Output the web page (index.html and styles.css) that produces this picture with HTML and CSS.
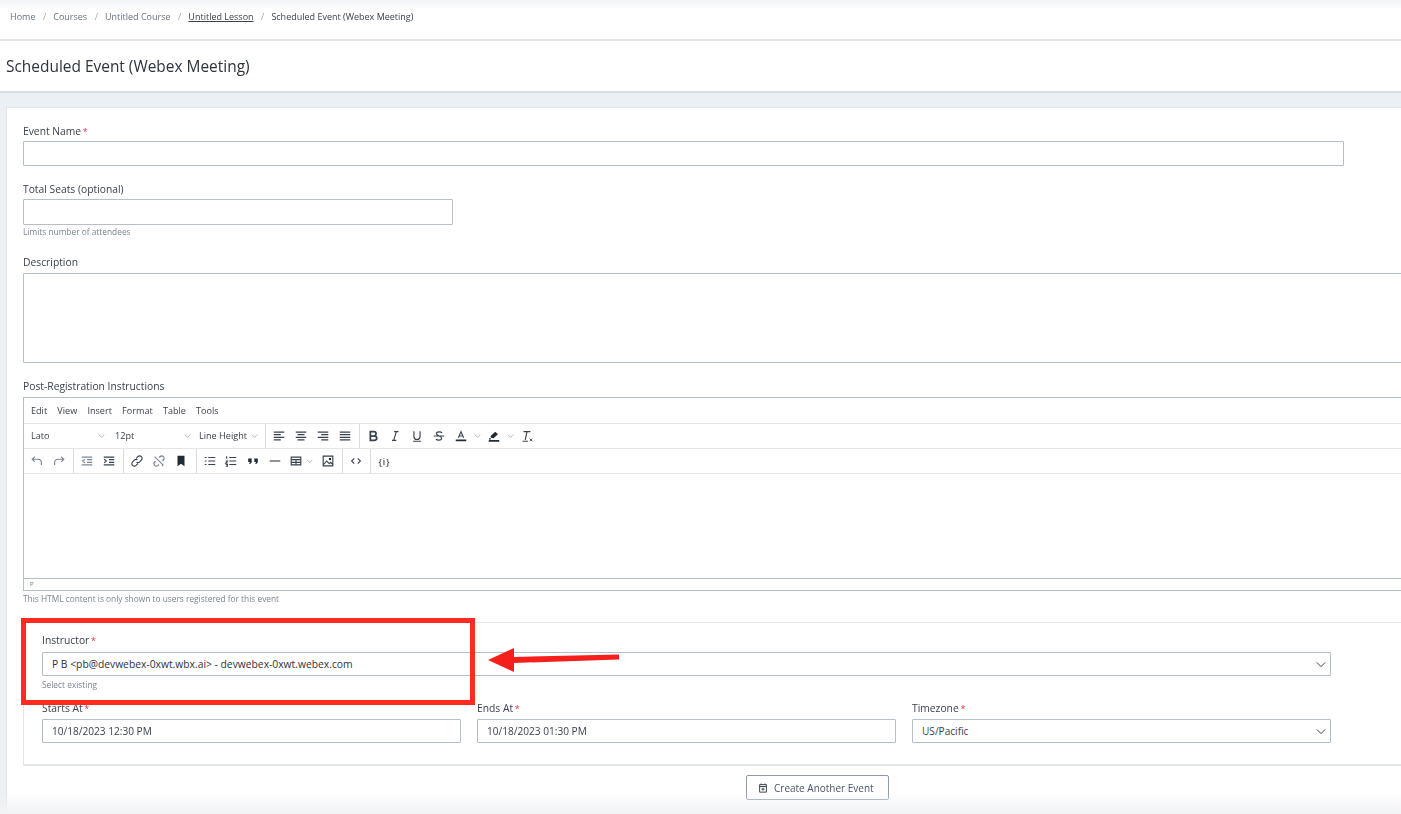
FILE: index.html
```html
<!DOCTYPE html>
<html lang="en">
<head>
<meta charset="utf-8">
<title>Scheduled Event (Webex Meeting)</title>
<link rel="stylesheet" href="styles.css">
</head>
<body>
<div class="page">
  <nav class="crumbs">
    <a>Home</a><i>/</i><a>Courses</a><i>/</i><a>Untitled Course</a><i>/</i><a class="u">Untitled Lesson</a><i>/</i><span>Scheduled Event (Webex Meeting)</span>
  </nav>
  <header class="title"><h1>Scheduled Event (Webex Meeting)</h1></header>
  <main class="content">
    <form class="card">
      <div class="label l-first">Event Name <b>*</b></div>
      <div class="input name"></div>
      <div class="label l-seats">Total Seats (optional)</div>
      <div class="input seats"></div>
      <div class="help h-seats">Limits number of attendees</div>
      <div class="label l-desc">Description</div>
      <div class="input desc"></div>
      <div class="label l-post">Post-Registration Instructions</div>
      <div class="editor">
        <div class="menu"><span>Edit</span><span>View</span><span>Insert</span><span>Format</span><span>Table</span><span>Tools</span></div>
        <div class="bar">
          <div class="pick p-font">Lato<svg class="chev" viewBox="0 0 10 6"><path d="M1 1l4 4 4-4"/></svg></div>
          <div class="pick p-size">12pt<svg class="chev" viewBox="0 0 10 6"><path d="M1 1l4 4 4-4"/></svg></div>
          <div class="pick p-line sep">Line Height<svg class="chev" viewBox="0 0 10 6"><path d="M1 1l4 4 4-4"/></svg></div>
          <div class="grp sep">
            <span class="btn"><svg viewBox="0 0 16 16"><path class="s" d="M2 3.500h12M2 6.500h8M2 9.500h12M2 12.500h8"/></svg></span>
            <span class="btn"><svg viewBox="0 0 16 16"><path class="s" d="M2 3.500h12M4 6.500h8M2 9.500h12M4 12.500h8"/></svg></span>
            <span class="btn"><svg viewBox="0 0 16 16"><path class="s" d="M2 3.500h12M6 6.500h8M2 9.500h12M6 12.500h8"/></svg></span>
            <span class="btn"><svg viewBox="0 0 16 16"><path class="s" d="M2 3.500h12M2 6.500h12M2 9.500h12M2 12.500h12"/></svg></span>
          </div>
          <div class="grp">
            <span class="btn"><svg viewBox="0 0 16 16"><path class="s b" d="M5 3h4a2.500 2.500 0 010 5H5zM5 8h4.800a2.500 2.500 0 010 5H5z"/></svg></span>
            <span class="btn"><svg viewBox="0 0 16 16"><path class="s" d="M7 3h5M4.500 13h5M9.500 3l-3 10"/></svg></span>
            <span class="btn"><svg viewBox="0 0 16 16"><path class="s" d="M4.500 2.500v6a3.500 3.500 0 007 0v-6M3.500 14h9"/></svg></span>
            <span class="btn"><svg viewBox="0 0 16 16"><path class="s" d="M2 8h12M11.500 4.500C10.500 3 5 2.500 5 5.500c0 2 6 2.500 6 5 0 3-5.500 2.500-6.500 1"/></svg></span>
            <span class="btn"><svg viewBox="0 0 16 16"><path class="s" d="M5 10l3-7 3 7M6 8h4"/><path class="k" d="M2 12h12v2H2z"/></svg></span>
            <span class="mini"><svg class="chev" viewBox="0 0 10 6"><path d="M1 1l4 4 4-4"/></svg></span>
            <span class="btn"><svg viewBox="0 0 16 16"><path class="k" d="M9.500 3l3 3-5 4.500-3-.5-.5-2zM3 10l2 1.500-1 .5H2zM2 12.500h12V14.500H2z"/></svg></span>
            <span class="mini"><svg class="chev" viewBox="0 0 10 6"><path d="M1 1l4 4 4-4"/></svg></span>
            <span class="btn"><svg viewBox="0 0 16 16"><path class="s" d="M4 3h8M8 3L6 12.500M3 14h6"/><path class="s thin" d="M11 11l3 3M14 11l-3 3"/></svg></span>
          </div>
        </div>
        <div class="bar">
          <div class="grp sep g-a">
            <span class="btn"><svg viewBox="0 0 16 16"><path class="s lite" d="M5.500 3L2.500 6l3 3M3 6h6a4 4 0 014 4v2.500"/></svg></span>
            <span class="btn"><svg viewBox="0 0 16 16"><path class="s lite" d="M10.500 3l3 3-3 3M13 6H7a4 4 0 00-4 4v2.500"/></svg></span>
          </div>
          <div class="grp sep">
            <span class="btn"><svg viewBox="0 0 16 16"><path class="s lite" d="M2 3.500h12M8 6.500h6M8 9.500h6M2 12.500h12M5.500 6L3 8l2.500 2"/></svg></span>
            <span class="btn"><svg viewBox="0 0 16 16"><path class="s" d="M2 3.500h12M8 6.500h6M8 9.500h6M2 12.500h12M2.500 6L5 8l-2.500 2"/></svg></span>
          </div>
          <div class="grp sep g-c">
            <span class="btn"><svg viewBox="0 0 16 16"><path class="s" d="M7 5l2-2a2.800 2.800 0 014 4l-2 2a2.800 2.800 0 01-3.500.4M9 11l-2 2a2.800 2.800 0 01-4-4l2-2a2.800 2.800 0 013.500-.4"/></svg></span>
            <span class="btn"><svg viewBox="0 0 16 16"><path class="s lite" d="M8 4l1-1a2.800 2.800 0 014 4l-1 1M8 12l-1 1a2.800 2.800 0 01-4-4l1-1M3 3l10 10M10 2v2M2 10h2M12 14v-2M14 6h-2"/></svg></span>
            <span class="btn"><svg viewBox="0 0 16 16"><path class="k" d="M4 2h8v12l-4-3-4 3z"/></svg></span>
          </div>
          <div class="grp sep">
            <span class="btn"><svg viewBox="0 0 16 16"><path class="s" d="M6 4h8M6 8h8M6 12h8"/><path class="s dots" d="M2 4h2M2 8h2M2 12h2"/></svg></span>
            <span class="btn tight"><svg viewBox="0 0 16 16"><path class="s" d="M6 4h8M6 8h8M6 12h8M3 2.500v3M2 8h2l-2 2.500h2M2 12h2v2H2"/></svg></span>
            <span class="btn"><svg viewBox="0 0 16 16"><path class="k" d="M2.500 5h4v3.500c0 1.500-1 2.500-2.500 3l-.5-1c.7-.3 1-.8 1-1.500h-2zM9.500 5h4v3.500c0 1.500-1 2.500-2.500 3l-.5-1c.7-.3 1-.8 1-1.500h-2z"/></svg></span>
            <span class="btn"><svg viewBox="0 0 16 16"><path class="s" d="M2 8h12"/></svg></span>
            <span class="btn tight"><svg viewBox="0 0 16 16"><path class="s" d="M2.500 3.500h11v9h-11zM2.500 6.500h11M8 6.500v6M2.500 9.500h11"/></svg></span>
            <span class="mini m-table"><svg class="chev" viewBox="0 0 10 6"><path d="M1 1l4 4 4-4"/></svg></span>
            <span class="btn"><svg viewBox="0 0 16 16"><path class="s" d="M2.500 2.500h11v11h-11zM3 12l3.500-4 3 3 1.500-1.500 2.500 2.500"/><path class="k" d="M9 4.500h2.500V7H9z"/></svg></span>
          </div>
          <div class="grp sep">
            <span class="btn"><svg viewBox="0 0 16 16"><path class="s" d="M6 5L3 8l3 3M10 5l3 3-3 3"/></svg></span>
          </div>
          <div class="grp"><span class="btn var">{<em>i</em>}</span></div>
        </div>
        <div class="area"></div>
        <div class="status">P</div>
      </div>
      <div class="help h-html">This HTML content is only shown to users registered for this event</div>
      <fieldset class="box">
        <div class="label">Instructor <b>*</b></div>
        <div class="input sel instr">P B &lt;pb@devwebex-0xwt.wbx.ai&gt; - devwebex-0xwt.webex.com<svg class="dd" viewBox="0 0 12 8"><path d="M1 1.500l5 5 5-5"/></svg></div>
        <div class="help">Select existing</div>
        <div class="cols">
          <div class="col"><div class="label">Starts At <b>*</b></div><div class="input val">10/18/2023 12:30 PM</div></div>
          <div class="col"><div class="label">Ends At <b>*</b></div><div class="input val">10/18/2023 01:30 PM</div></div>
          <div class="col"><div class="label">Timezone <b>*</b></div><div class="input val sel">US/Pacific<svg class="dd" viewBox="0 0 12 8"><path d="M1 1.500l5 5 5-5"/></svg></div></div>
        </div>
      </fieldset>
      <div class="actions">
        <button type="button" class="create"><svg viewBox="0 0 16 16"><path class="s" d="M3.500 3.500h9v10h-9zM3.500 6h9M5.500 2v2M10.500 2v2M8 7.500v4M6 9.500h4"/></svg>Create Another Event</button>
      </div>
    </form>
  </main>
</div>
<div class="shade-top"></div>
<div class="shade-bottom"></div>
<div class="redbox"></div>
<svg class="arrow" viewBox="0 0 135 28"><path d="M0 14L26 2v9l105-2.500v5L26 17v9z"/></svg>
</body>
</html>
```
FILE: styles.css
```css
* { box-sizing: border-box; }
html, body { margin: 0; height: 814px; overflow: hidden; background: #fff; }
body { font-family: "Open Sans", sans-serif; color: #39424e; position: relative; }
.page { width: 1401px; height: 814px; overflow: hidden; filter: blur(0.3px); }

.crumbs { height: 41px; border-bottom: 2px solid #e4e7ea; padding: 11px 0 0 10px; font-size: 9px; line-height: 12px; display: flex; color: #66727f; white-space: nowrap; }
.crumbs i { font-style: normal; color: #a0a8b2; margin: 0 7px 0 7.5px; }
.crumbs .u { text-decoration: underline; color: #39424e; }
.crumbs span { color: #39424e; }

.title { height: 52px; border-bottom: 2px solid #d8dde2; padding: 14px 0 0 6px; }
.title h1 { margin: 0; font-size: 15.45px; line-height: 22px; font-weight: 400; color: #2c333b; }

.content { background: #ebf0f4; padding: 14px 0 0 6px; height: 721px; }
.card { width: 1500px; height: 720px; background: #fff; border: 1px solid #dfe4e8; padding: 16px 0 0 16px; display: block; }

.label { font-size: 10.3px; line-height: 14px; height: 14px; color: #39424e; white-space: nowrap; }
.label b { color: #e5344a; font-weight: 400; font-size: 9px; line-height: 0; margin-left: -1px; }
.l-seats { margin-top: 16px; }
.l-desc { margin-top: 18px; }
.l-post { margin-top: 16px; }
.input { border: 1px solid #b5bfcc; border-radius: 1px; background: #fff; margin-top: 3px; }
.name { width: 1321px; height: 25px; }
.seats { width: 430px; height: 26px; }
.desc { width: 1450px; height: 90px; margin-top: 4px; }
.help { font-size: 8.35px; line-height: 11px; color: #7a8591; margin-top: 2px; white-space: nowrap; }
.h-seats { margin-top: 1px; }

.editor { width: 1450px; height: 194px; border: 1px solid #b5bfcc; margin-top: 4px; font-size: 9.1px; color: #39424e; }
.menu { height: 26px; border-bottom: 1px solid #e4e7ea; display: flex; gap: 10.2px; padding: 6px 0 0 7px; line-height: 14px; }
.bar { height: 25px; border-bottom: 1px solid #e4e7ea; display: flex; align-items: stretch; }
.pick { display: flex; align-items: center; white-space: nowrap; line-height: 14px; }
.p-font { width: 84px; padding-left: 7px; justify-content: space-between; padding-right: 3px; }
.p-size { width: 84px; padding-left: 7px; justify-content: space-between; padding-right: 1px; }
.p-line { width: 74px; padding-left: 7px; gap: 4px; }
.sep { border-right: 1px solid #d8dde2; }
.grp { display: flex; align-items: center; padding: 0 3px 0 2px; }
.g-a { padding-left: 2px; }
.g-c { padding-right: 4px; }
.btn { width: 22px; height: 22px; display: flex; align-items: center; justify-content: center; flex: none; }
.btn svg { width: 14px; height: 14px; display: block; }
.tight { margin-left: -1px; }
.mini { width: 10px; display: flex; align-items: center; justify-content: center; flex: none; margin: 0 1px 0 0; }
.m-table { margin: 0 3px 0 -3px; }
.chev { width: 7px; height: 4px; flex: none; }
.chev path { fill: none; stroke: #8a94a0; stroke-width: 1; }
.s { fill: none; stroke: #39424e; stroke-width: 1.3; }
.s.b { stroke-width: 2; }
.s.thin { stroke-width: 1; }
.s.lite { stroke: #7c8691; }
.s.dots { stroke-dasharray: 2 2; }
.k { fill: #222b33; }
.var { font-size: 8.5px; font-weight: 600; color: #39424e; }
.var em { font-style: normal; margin: 0 1px; }
.area { height: 105px; border-bottom: 1px solid #b5bfcc; }
.status { height: 12px; font-size: 6px; line-height: 11px; padding-left: 6px; color: #66727f; }

.h-html { margin-top: 2px; }
.box { width: 1450px; height: 144px; margin: 18px 0 0; padding: 10px 0 0 18px; border: 1px solid #e4e7ea; border-width: 1px 1px 2px; }
.sel { position: relative; }
.instr { width: 1289px; height: 24px; margin-top: 5px; font-size: 10.3px; line-height: 22px; padding-left: 9px; color: #2c333b; }
.box > .help { margin-top: 3px; }
.cols { display: flex; gap: 16px; width: 1289px; margin-top: 11px; }
.col { flex: 1; }
.val { height: 24px; font-size: 10.1px; line-height: 22px; padding-left: 9px; color: #39424e; margin-top: 4px; }
.dd { position: absolute; right: 4px; top: 8px; width: 10px; height: 7px; }
.dd path { fill: none; stroke: #39424e; stroke-width: 1.2; }

.actions { width: 1401px; padding-left: 723px; margin-top: 9px; }
.create { width: 143px; height: 25px; background: #fff; border: 1px solid #8f9bab; border-radius: 2px; font: 400 10px/14px "Open Sans", sans-serif; color: #4a5562; display: flex; align-items: center; gap: 5px; padding: 0 0 0 10px; white-space: nowrap; }
.create svg { width: 12px; height: 12px; flex: none; }

.shade-top { position: absolute; left: 0; top: 0; width: 100%; height: 10px; background: linear-gradient(#f2f4f6, #fff); }
.shade-bottom { position: absolute; left: 0; bottom: 0; width: 100%; height: 22px; background: linear-gradient(rgba(240,242,244,0), #f2f3f5); pointer-events: none; }
.redbox { position: absolute; left: 21px; top: 618px; width: 454px; height: 87px; border: 5px solid #ff2a20; }
.arrow { position: absolute; left: 488px; top: 646px; width: 135px; height: 28px; }
.arrow path { fill: #f5201c; }
```
